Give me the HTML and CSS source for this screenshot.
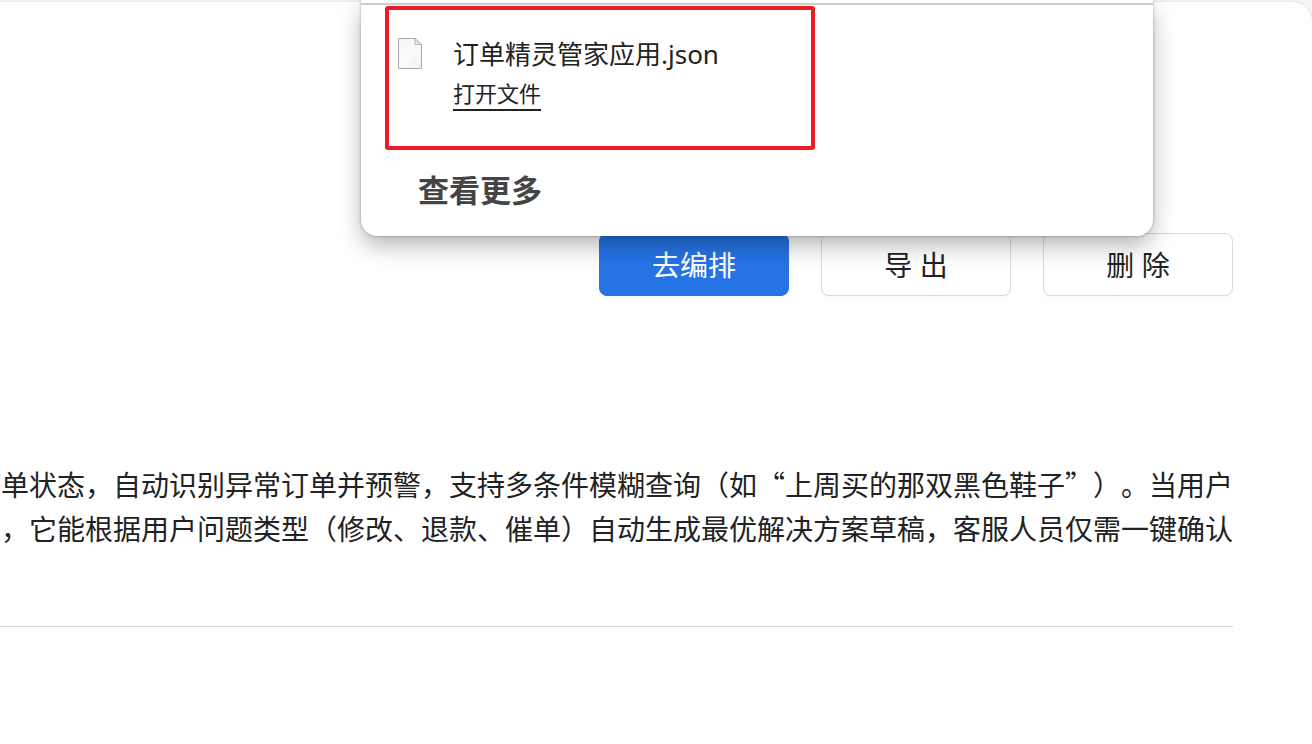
FILE: index.html
```html
<!DOCTYPE html>
<html lang="zh-CN">
<head>
    <meta charset="UTF-8">
    <title>订单精灵管家应用</title>
    <link rel="stylesheet" href="styles.css">
</head>
<body>
    <main class="sheet">
        <div class="actions">
            <button type="button" class="button primary">去编排</button>
            <button type="button" class="button">导 出</button>
            <button type="button" class="button">删 除</button>
        </div>

        <div class="description">
            <p>订单状态，自动识别异常订单并预警，支持多条件模糊查询（如“上周买的那双黑色鞋子”）。当用户<br>是，它能根据用户问题类型（修改、退款、催单）自动生成最优解决方案草稿，客服人员仅需一键确认</p>
        </div>
    </main>

    <!-- Downloads popup -->
    <aside class="downloads">
        <div class="download-item">
            <svg class="file-icon" width="26" height="32" viewBox="0 0 26 32">
                <defs>
                    <linearGradient id="paper" x1="0" y1="0" x2="1" y2="1">
                        <stop offset="0" stop-color="#f4f5f6"/>
                        <stop offset="0.5" stop-color="#fafbfc"/>
                        <stop offset="1" stop-color="#eff1f4"/>
                    </linearGradient>
                </defs>
                <path d="M1.5 1.5H18L24.5 8V31.5H1.5Z" fill="url(#paper)" stroke="#a9a9a9"/>
                <path d="M18 1.5V7.5H24.5Z" fill="#e6e6e6" stroke="#b4b4b4"/>
            </svg>
            <div class="download-info">
                <span class="file-name">订单精灵管家应用.json</span>
                <a href="#" class="open-link">打开文件</a>
            </div>
        </div>
        <a href="#" class="more-link">查看更多</a>
    </aside>
</body>
</html>
```
FILE: styles.css
```css
* { box-sizing: border-box; }
body { margin: 0; padding-top: 2px; background: #f5f5f5; color: #222; font-family: "Noto Sans", "Noto Sans CJK SC", sans-serif; font-size: 28px; overflow: hidden; }

.sheet { min-height: 100vh; padding: 231px 79px 0 0; background: #fff; border-radius: 0 20px 0 0; box-shadow: 0 0 3px rgba(0,0,0,0.12); }

.actions { display: flex; justify-content: flex-end; gap: 32px; }
.button { width: 190px; height: 63px; padding: 0 0 2px; background: #fff; color: #222; border: 1px solid #d9d9d9; border-radius: 8px; box-shadow: 0 4px 0 rgba(0,0,0,0.02); font-family: inherit; font-size: 28px; cursor: pointer; }
.primary { background: #2673e5; border-color: #2673e5; color: #fff; }

.description { display: flex; justify-content: flex-end; margin-top: 166px; padding-bottom: 76px; border-bottom: 1px solid #d9d9d9; }
.description p { margin: 0; line-height: 44px; white-space: nowrap; text-align: right; font-family: "Noto Sans CJK SC", sans-serif; text-spacing-trim: space-all; }

.downloads { position: absolute; top: 0; right: 159px; width: 792px; padding: 0 24px 24px; background: #fff; border-radius: 0 0 16px 16px; box-shadow: 0 0 3px rgba(0,0,0,0.3), 0 10px 24px -2px rgba(0,0,0,0.32); }
.downloads::before { content: ""; display: block; height: 2px; margin: 3px -24px 1px; background: #ccc; }
.download-item { display: flex; gap: 30px; width: 430px; height: 144px; padding: 26px 8px; border: 4px solid #ed1c24; border-radius: 3px; }
.file-icon { flex: none; margin-top: 1px; }
.download-info { display: flex; flex-direction: column; align-items: flex-start; }
.file-name { font-size: 26px; line-height: 36px; }
.open-link { margin-top: 6px; padding-bottom: 1px; color: #222; font-size: 22px; line-height: 30px; text-decoration: none; border-bottom: 2px solid #222; }
.more-link { display: block; margin: 19px 0 0 33px; padding-bottom: 1px; color: #444; font-size: 31px; font-weight: bold; line-height: 42px; text-decoration: none; }
```
